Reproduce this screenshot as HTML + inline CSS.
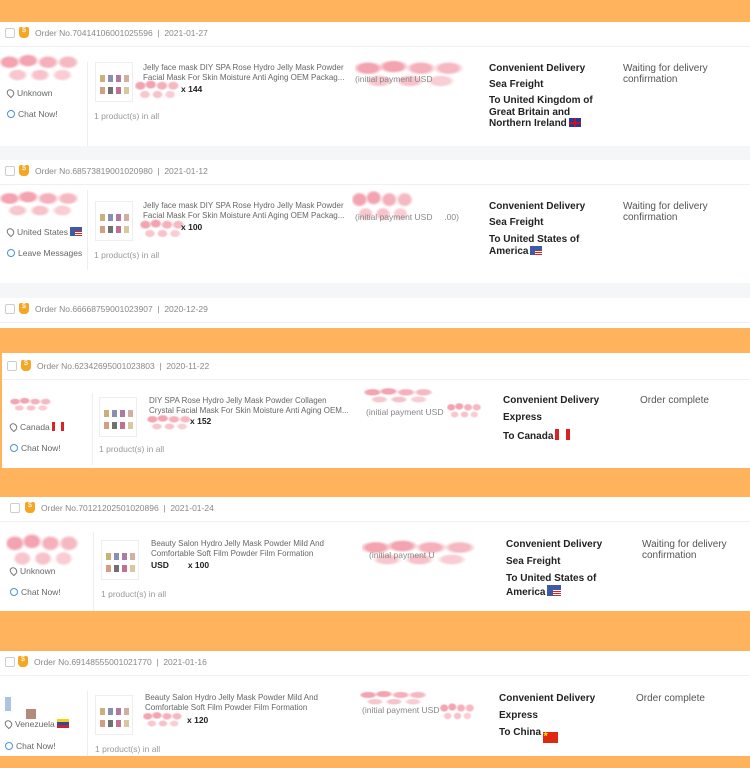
<!DOCTYPE html>
<html><head><meta charset="utf-8"><style>
*{margin:0;padding:0;box-sizing:border-box}
body{width:750px;height:768px;overflow:hidden;background:#ffb35c;font-family:"Liberation Sans",sans-serif;position:relative}
.abs{position:absolute}
.card{position:absolute;left:0;width:750px;background:#fff}
.hd{position:absolute;left:0;right:0;top:0;height:25px;border-bottom:1px solid #eef0f3}
.cb{position:absolute;left:5px;top:6px;width:10px;height:10px;border:1px solid #ccc;border-radius:2px;background:#fff}
.bd{position:absolute;left:19px;top:5px;width:10px;height:11px;background:#f5a623;border-radius:2px 2px 4px 4px}
.bd:after{content:"$";position:absolute;left:3px;top:0;font-size:7px;color:#fff}
.on{position:absolute;left:35px;top:6px;font-size:8.5px;color:#888;white-space:nowrap}
.loc,.chat,.pc,.t,.qty,.ip{position:absolute;font-size:8.5px;color:#666;white-space:nowrap}
.t{color:#666;line-height:10px;font-size:8px}
.qty{color:#222;font-weight:bold;font-size:8.5px}
.dv{position:absolute;font-size:10px;font-weight:bold;color:#222;line-height:11.5px}
.st{position:absolute;font-size:10px;color:#555;line-height:11px}
.img{position:absolute;width:38px;height:40px;border:1px solid #eee;background:
linear-gradient(90deg,transparent 4px,#c9b27a 4px,#c9b27a 9px,transparent 9px,transparent 12px,#8a8fb0 12px,#8a8fb0 17px,transparent 17px,transparent 20px,#b07aa0 20px,#b07aa0 25px,transparent 25px,transparent 28px,#d0b0a0 28px,#d0b0a0 33px,transparent 33px) 0 12px/100% 7px no-repeat,
linear-gradient(90deg,transparent 4px,#d0a080 4px,#d0a080 9px,transparent 9px,transparent 12px,#707070 12px,#707070 17px,transparent 17px,transparent 20px,#c07090 20px,#c07090 25px,transparent 25px,transparent 28px,#d8c8a0 28px,#d8c8a0 33px,transparent 33px) 0 24px/100% 7px no-repeat,#fff}
.vl{position:absolute;width:1px;background:#eee}
.blob{position:absolute;background:
radial-gradient(ellipse 14% 22% at 12% 35%,#f4a3b0 60%,transparent 100%),
radial-gradient(ellipse 14% 22% at 35% 30%,#f4a3b0 60%,transparent 100%),
radial-gradient(ellipse 14% 22% at 60% 35%,#f6b0bc 60%,transparent 100%),
radial-gradient(ellipse 14% 22% at 85% 35%,#f6b9c2 60%,transparent 100%),
radial-gradient(ellipse 13% 20% at 22% 75%,#f8c6cd 60%,transparent 100%),
radial-gradient(ellipse 13% 20% at 50% 75%,#f8c2ca 60%,transparent 100%),
radial-gradient(ellipse 13% 20% at 78% 75%,#f9cdd3 60%,transparent 100%)}
.pin{display:inline-block;width:7px;height:8px;border:1px solid #777;border-radius:50% 50% 50% 0;transform:rotate(-45deg);margin-right:3px;vertical-align:-1px}
.cir{display:inline-block;width:8px;height:8px;border:1px solid #4a90e2;border-radius:50%;margin-right:3px;vertical-align:-1px}
.fl{display:inline-block;width:12px;height:9px;vertical-align:-1px;margin-left:2px}
</style></head><body>

<div class="card" style="top:22px;height:124px">
 <div class="hd"><div class="cb"></div><div class="bd"></div><div class="on">Order No.70414106001025596 &nbsp;| &nbsp;2021-01-27</div></div>
 <div class="blob" style="left:0;top:29px;width:80px;height:32px"></div>
 <div class="loc" style="left:7px;top:66px"><span class="pin"></span>Unknown</div>
 <div class="chat" style="left:7px;top:87px"><span class="cir"></span>Chat Now!</div>
 <div class="vl" style="left:87px;top:40px;height:84px"></div>
 <div class="img" style="left:95px;top:40px"></div>
 <div class="t" style="left:143px;top:41px">Jelly face mask DIY SPA Rose Hydro Jelly Mask Powder<br>Facial Mask For Skin Moisture Anti Aging OEM Packag...</div>
 <div class="blob" style="left:135px;top:56px;width:45px;height:22px"></div>
 <div class="qty" style="left:181px;top:62px">x 144</div>
 <div class="pc" style="left:94px;top:89px;color:#999">1 product(s) in all</div>
 <div class="blob" style="left:355px;top:35px;width:110px;height:32px"></div>
 <div class="ip" style="left:355px;top:52px;color:#888">(initial payment USD</div>
 <div class="dv" style="left:489px;top:41px">Convenient Delivery</div>
 <div class="dv" style="left:489px;top:57px">Sea Freight</div>
 <div class="dv" style="left:489px;top:73px">To United Kingdom of<br>Great Britain and<br>Northern Ireland<span class="fl" style="background:linear-gradient(#c8102e,#c8102e) center/100% 2px no-repeat,linear-gradient(90deg,transparent 5px,#c8102e 5px,#c8102e 7px,transparent 7px),#2a3b8f"></span></div>
 <div class="st" style="left:623px;top:41px">Waiting for delivery<br>confirmation</div>
</div>
<div class="abs" style="top:146px;left:0;width:750px;height:14px;background:#f5f6f8"></div>

<div class="card" style="top:160px;height:123px">
 <div class="hd"><div class="cb"></div><div class="bd"></div><div class="on">Order No.68573819001020980 &nbsp;| &nbsp;2021-01-12</div></div>
 <div class="blob" style="left:0;top:28px;width:80px;height:30px"></div>
 <div class="loc" style="left:7px;top:67px"><span class="pin"></span>United States<span class="fl" style="background:repeating-linear-gradient(#d22 0 1px,#fff 1px 2px);box-shadow:inset 5px 4px 0 #3c5aa6"></span></div>
 <div class="chat" style="left:7px;top:88px"><span class="cir"></span>Leave Messages</div>
 <div class="vl" style="left:87px;top:30px;height:80px"></div>
 <div class="img" style="left:95px;top:41px"></div>
 <div class="t" style="left:143px;top:41px">Jelly face mask DIY SPA Rose Hydro Jelly Mask Powder<br>Facial Mask For Skin Moisture Anti Aging OEM Packag...</div>
 <div class="blob" style="left:140px;top:57px;width:45px;height:22px"></div>
 <div class="qty" style="left:181px;top:62px">x 100</div>
 <div class="pc" style="left:94px;top:90px;color:#999">1 product(s) in all</div>
 <div class="blob" style="left:352px;top:27px;width:62px;height:36px"></div>
 <div class="ip" style="left:355px;top:52px;color:#888">(initial payment USD &nbsp;&nbsp;&nbsp;&nbsp;.00)</div>
 <div class="dv" style="left:489px;top:41px">Convenient Delivery</div>
 <div class="dv" style="left:489px;top:57px">Sea Freight</div>
 <div class="dv" style="left:489px;top:74px">To United States of<br>America<span class="fl" style="background:repeating-linear-gradient(#d22 0 1px,#fff 1px 2px);box-shadow:inset 5px 4px 0 #3c5aa6"></span></div>
 <div class="st" style="left:623px;top:41px">Waiting for delivery<br>confirmation</div>
</div>
<div class="abs" style="top:283px;left:0;width:750px;height:15px;background:#f5f6f8"></div>

<div class="card" style="top:298px;height:30px">
 <div class="hd"><div class="cb"></div><div class="bd"></div><div class="on">Order No.66668759001023907 &nbsp;| &nbsp;2020-12-29</div></div>
</div>

<div class="card" style="top:353px;left:2px;height:115px">
 <div class="hd" style="top:2px"><div class="cb"></div><div class="bd"></div><div class="on">Order No.62342695001023803 &nbsp;| &nbsp;2020-11-22</div></div>
 <div class="blob" style="left:8px;top:43px;width:42px;height:16px"></div>
 <div class="loc" style="left:8px;top:69px"><span class="pin"></span>Canada<span class="fl" style="background:linear-gradient(90deg,#d22 3px,#fff 3px,#fff 9px,#d22 9px)"></span></div>
 <div class="chat" style="left:8px;top:90px"><span class="cir"></span>Chat Now!</div>
 <div class="vl" style="left:90px;top:40px;height:72px"></div>
 <div class="img" style="left:97px;top:44px"></div>
 <div class="t" style="left:147px;top:43px">DIY SPA Rose Hydro Jelly Mask Powder Collagen<br>Crystal Facial Mask For Skin Moisture Anti Aging OEM...</div>
 <div class="blob" style="left:145px;top:60px;width:45px;height:18px"></div>
 <div class="qty" style="left:188px;top:63px">x 152</div>
 <div class="pc" style="left:97px;top:91px;color:#999">1 product(s) in all</div>
 <div class="blob" style="left:362px;top:33px;width:70px;height:18px"></div>
 <div class="ip" style="left:364px;top:54px;color:#888">(initial payment USD</div>
 <div class="blob" style="left:445px;top:48px;width:35px;height:18px"></div>
 <div class="dv" style="left:501px;top:42px">Convenient Delivery</div>
 <div class="dv" style="left:501px;top:59px">Express</div>
 <div class="dv" style="left:501px;top:76px">To Canada<span class="fl" style="width:15px;height:11px;background:linear-gradient(90deg,#d22 4px,#fff 4px,#fff 11px,#d22 11px)"></span></div>
 <div class="st" style="left:638px;top:42px">Order complete</div>
</div>

<div class="card" style="top:497px;height:114px">
 <div class="hd"><div class="cb" style="left:10px"></div><div class="bd" style="left:25px"></div><div class="on" style="left:41px">Order No.70121202501020896 &nbsp;| &nbsp;2021-01-24</div></div>
 <div class="blob" style="left:6px;top:33px;width:74px;height:38px"></div>
 <div class="loc" style="left:10px;top:69px"><span class="pin"></span>Unknown</div>
 <div class="chat" style="left:10px;top:90px"><span class="cir"></span>Chat Now!</div>
 <div class="vl" style="left:93px;top:35px;height:79px"></div>
 <div class="img" style="left:101px;top:43px"></div>
 <div class="t" style="left:151px;top:42px">Beauty Salon Hydro Jelly Mask Powder Mild And<br>Comfortable Soft Film Powder Film Formation</div>
 <div class="qty" style="left:151px;top:63px">USD &nbsp;&nbsp;&nbsp;&nbsp;&nbsp;&nbsp;&nbsp;x 100</div>
 <div class="pc" style="left:101px;top:92px;color:#999">1 product(s) in all</div>
 <div class="blob" style="left:362px;top:40px;width:115px;height:30px"></div>
 <div class="ip" style="left:369px;top:53px;color:#888">(initial payment U</div>
 <div class="dv" style="left:506px;top:42px">Convenient Delivery</div>
 <div class="dv" style="left:506px;top:59px">Sea Freight</div>
 <div class="dv" style="left:506px;top:76px">To United States of<br>America<span class="fl" style="width:14px;height:11px;background:repeating-linear-gradient(#d22 0 1px,#fff 1px 2px);box-shadow:inset 6px 5px 0 #3c5aa6"></span></div>
 <div class="st" style="left:642px;top:42px">Waiting for delivery<br>confirmation</div>
</div>

<div class="card" style="top:651px;height:105px">
 <div class="hd"><div class="cb"></div><div class="bd" style="left:18px"></div><div class="on" style="left:34px">Order No.69148555001021770 &nbsp;| &nbsp;2021-01-16</div></div>
 <div class="abs" style="left:5px;top:46px;width:6px;height:14px;background:#a9c5e0"></div>
 <div class="abs" style="left:26px;top:58px;width:10px;height:10px;background:#b58a7a"></div>
 <div class="loc" style="left:5px;top:68px"><span class="pin"></span>Venezuela<span class="fl" style="background:linear-gradient(#f7d117 33%,#2a4ba0 33%,#2a4ba0 66%,#cf2030 66%)"></span></div>
 <div class="chat" style="left:5px;top:90px"><span class="cir"></span>Chat Now!</div>
 <div class="vl" style="left:87px;top:40px;height:65px"></div>
 <div class="img" style="left:95px;top:44px"></div>
 <div class="t" style="left:145px;top:42px">Beauty Salon Hydro Jelly Mask Powder Mild And<br>Comfortable Soft Film Powder Film Formation</div>
 <div class="blob" style="left:143px;top:59px;width:40px;height:18px"></div>
 <div class="qty" style="left:187px;top:64px">x 120</div>
 <div class="pc" style="left:95px;top:93px;color:#999">1 product(s) in all</div>
 <div class="blob" style="left:360px;top:38px;width:68px;height:17px"></div>
 <div class="ip" style="left:362px;top:54px;color:#888">(initial payment USD</div>
 <div class="blob" style="left:440px;top:50px;width:35px;height:20px"></div>
 <div class="dv" style="left:499px;top:42px">Convenient Delivery</div>
 <div class="dv" style="left:499px;top:59px">Express</div>
 <div class="dv" style="left:499px;top:76px">To China<span class="fl" style="width:15px;height:11px;background:#de2910;color:#ffde00;font-size:6px;line-height:6px">★</span></div>
 <div class="st" style="left:636px;top:42px">Order complete</div>
</div>
</body></html>
